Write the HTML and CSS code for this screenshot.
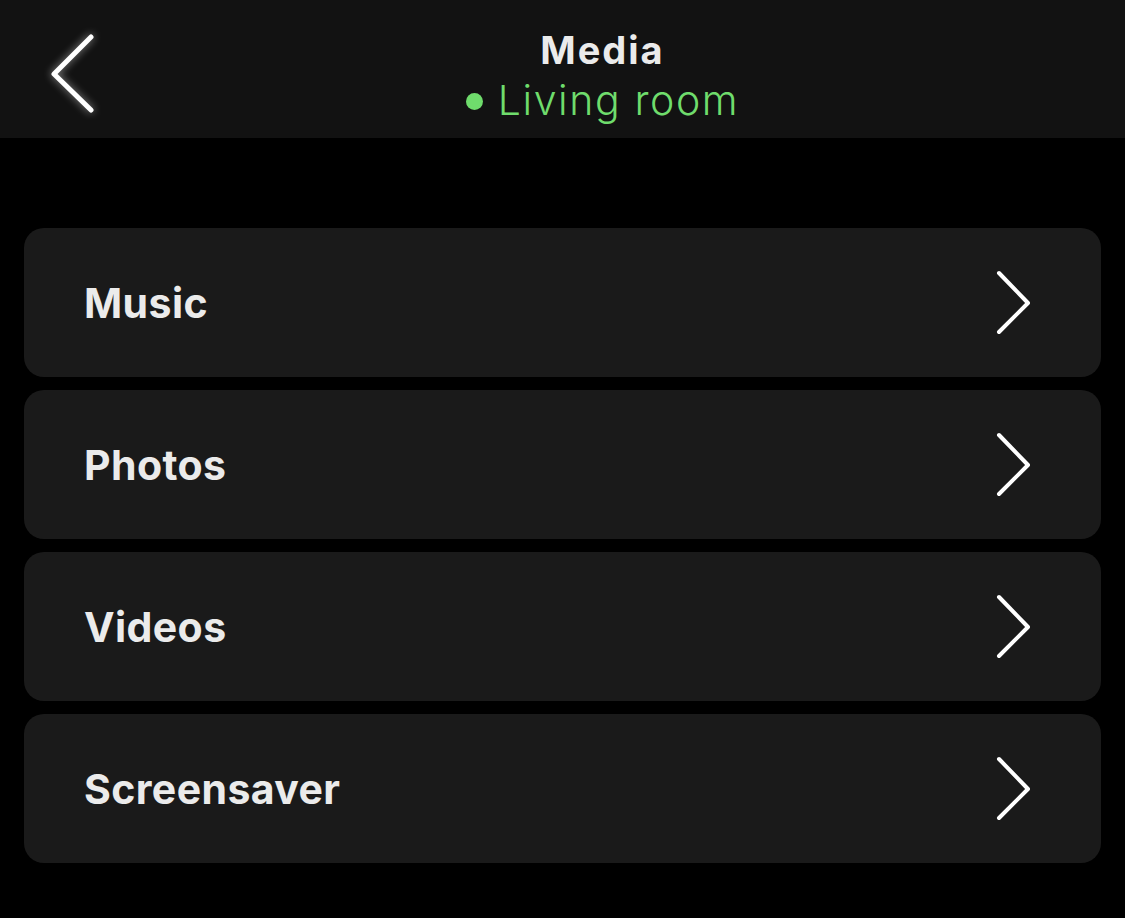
FILE: index.html
```html
<!DOCTYPE html>
<html lang="en">
<head>
<meta charset="utf-8">
<title>Media</title>
<link rel="stylesheet" href="styles.css">
</head>
<body>
<header class="topbar">
  <button class="back" aria-label="Back">
    <svg width="50" height="84" viewBox="0 0 50 84"><polyline points="42,8 5,45 42,81" fill="none" stroke="#fff" stroke-width="5" stroke-linecap="round" stroke-linejoin="round"/></svg>
  </button>
  <div class="title-block">
    <div class="title">Media</div>
    <div class="subtitle"><span class="dot"></span>Living room</div>
  </div>
</header>
<main class="list">
  <a class="row"><span class="label">Music</span><svg class="chev" width="40" height="70" viewBox="0 0 40 70"><polyline points="5,5 34,35 5,64" fill="none" stroke="#fff" stroke-width="4" stroke-linecap="round" stroke-linejoin="round"/></svg></a>
  <a class="row"><span class="label">Photos</span><svg class="chev" width="40" height="70" viewBox="0 0 40 70"><polyline points="5,5 34,35 5,64" fill="none" stroke="#fff" stroke-width="4" stroke-linecap="round" stroke-linejoin="round"/></svg></a>
  <a class="row"><span class="label">Videos</span><svg class="chev" width="40" height="70" viewBox="0 0 40 70"><polyline points="5,5 34,35 5,64" fill="none" stroke="#fff" stroke-width="4" stroke-linecap="round" stroke-linejoin="round"/></svg></a>
  <a class="row"><span class="label">Screensaver</span><svg class="chev" width="40" height="70" viewBox="0 0 40 70"><polyline points="5,5 34,35 5,64" fill="none" stroke="#fff" stroke-width="4" stroke-linecap="round" stroke-linejoin="round"/></svg></a>
</main>
</body>
</html>
```
FILE: styles.css
```css
* { box-sizing: border-box; }
html, body { margin: 0; padding: 0; }
body {
  background: #000;
  color: #ebebeb;
  font-family: Inter, "Noto Sans", "Liberation Sans", sans-serif;
  width: 1125px;
  height: 918px;
  overflow: hidden;
}
.topbar {
  position: relative;
  height: 138px;
  background: #121212;
  display: flex;
  justify-content: center;
  padding-left: 80px;
}
.back {
  position: absolute;
  left: 49px;
  top: 29px;
  background: none;
  border: 0;
  padding: 0;
  display: flex;
  filter: drop-shadow(0 0 4px rgba(255,255,255,0.55));
}
.title-block {
  display: flex;
  flex-direction: column;
  align-items: center;
  padding-top: 30px;
}
.title {
  font-size: 38px;
  font-weight: 700;
  line-height: 40px;
  color: #ebebeb;
  letter-spacing: 2px;
}
.subtitle {
  display: flex;
  align-items: center;
  gap: 15px;
  font-size: 41px;
  font-weight: 300;
  line-height: 44px;
  color: #6fdc6c;
  margin-top: 8px;
  letter-spacing: 1.6px;
}
.dot {
  width: 17px;
  height: 17px;
  border-radius: 50%;
  background: #6fdc6c;
  margin-top: 3px;
}
.list {
  display: flex;
  flex-direction: column;
  gap: 13px;
  padding: 90px 24px 0 24px;
}
.row {
  display: flex;
  align-items: center;
  justify-content: space-between;
  height: 149px;
  background: #1a1a1a;
  border-radius: 20px;
  padding: 0 67px 0 60px;
}
.label {
  font-size: 41px;
  font-weight: 700;
  color: #ebebeb;
  letter-spacing: 0.4px;
}
.chev { display: block; }
```
